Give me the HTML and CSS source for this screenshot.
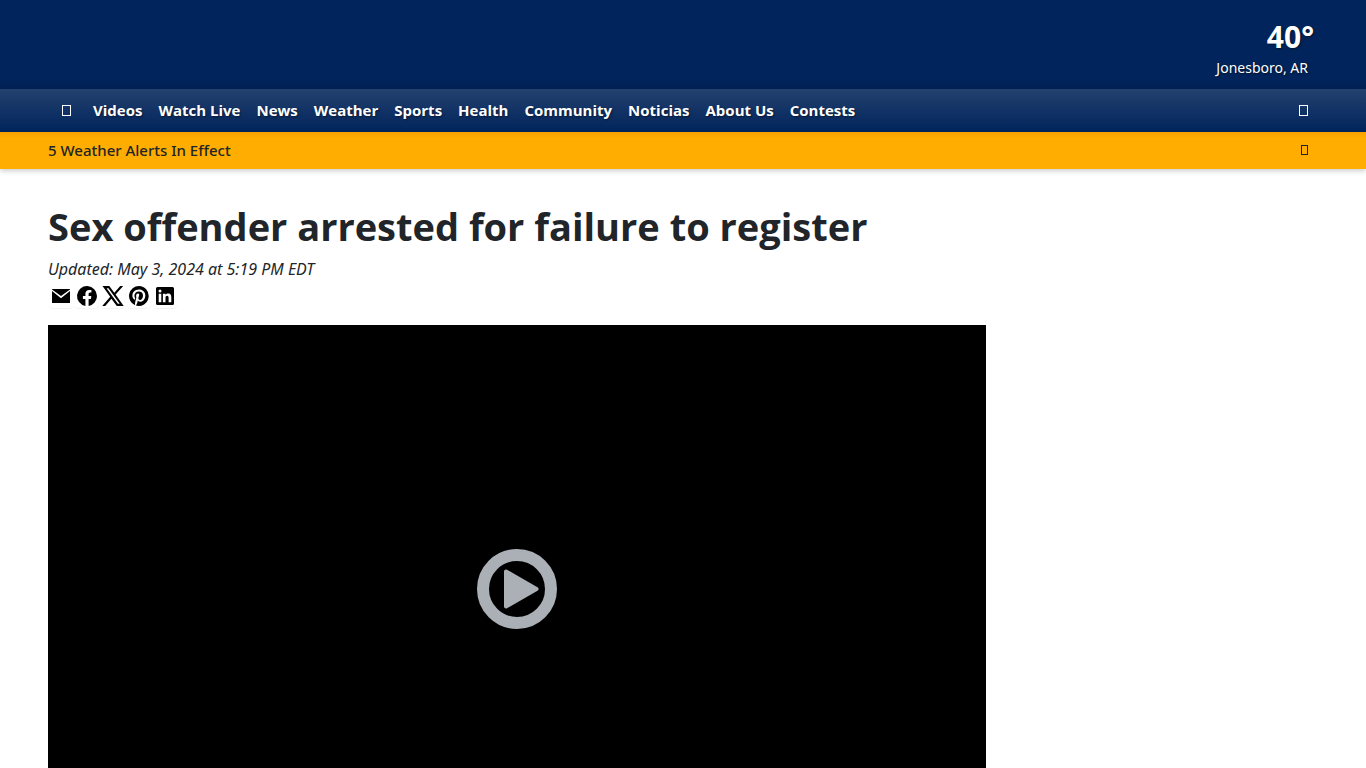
FILE: index.html
```html
<!DOCTYPE html>
<html lang="en">
<head>
<meta charset="utf-8">
<meta name="viewport" content="width=device-width, initial-scale=1">
<title>Sex offender arrested for failure to register</title>
<link rel="stylesheet" href="styles.css">
</head>
<body>
<header class="site-header">
  <div class="masthead">
    <a class="weather" href="#">
      <span class="weather-temp">40°</span>
      <span class="weather-place">Jonesboro, AR</span>
    </a>
  </div>
  <nav class="main-nav" aria-label="Main">
    <button class="icon-button" type="button" aria-label="Menu"><svg class="box-icon" viewBox="0 0 9 11"><rect x=".5" y=".5" width="8" height="10"/></svg></button>
    <ul class="nav-list">
      <li><a href="#">Videos</a></li>
      <li><a href="#">Watch Live</a></li>
      <li><a href="#">News</a></li>
      <li><a href="#">Weather</a></li>
      <li><a href="#">Sports</a></li>
      <li><a href="#">Health</a></li>
      <li><a href="#">Community</a></li>
      <li><a href="#">Noticias</a></li>
      <li><a href="#">About Us</a></li>
      <li><a href="#">Contests</a></li>
    </ul>
    <button class="icon-button" type="button" aria-label="Search"><svg class="box-icon" viewBox="0 0 9 11"><rect x=".5" y=".5" width="8" height="10"/></svg></button>
  </nav>
  <div class="alert-bar">
    <a href="#">5 Weather Alerts In Effect</a>
    <button class="icon-button" type="button" aria-label="Show alerts"><svg class="box-icon box-icon-small" viewBox="0 0 7 10"><rect x=".5" y=".5" width="6" height="9"/></svg></button>
  </div>
</header>
<main class="article">
  <h1>Sex offender arrested for failure to register</h1>
  <p class="updated">Updated: May 3, 2024 at 5:19 PM EDT</p>
  <div class="share">
    <a href="#" aria-label="Email"><svg viewBox="0 0 24 24"><path d="M3 7v12h18V7l-9 7.200zM3 5h18v.5L12 12 3 5.500z"/></svg></a>
    <a href="#" aria-label="Facebook"><svg viewBox="0 0 24 24"><path d="M22 12a10 10 0 1 0-11.600 9.900v-7H7.900V12h2.500V9.800c0-2.500 1.500-3.900 3.800-3.900 1.100 0 2.200.2 2.200.2v2.500h-1.200c-1.300 0-1.600.8-1.600 1.600V12h2.700l-.4 2.900h-2.300v7A10 10 0 0 0 22 12z"/></svg></a>
    <a href="#" aria-label="X"><svg viewBox="0 0 24 24"><path fill-rule="evenodd" d="M1.500 2h6.800l5 6.800L19.200 2h3L14.600 10.500 22.700 22h-6.900l-5.400-7.300L4.200 22h-3l8-9.200zM5.600 4.200l11.300 15.600h1.800L7.400 4.200z"/></svg></a>
    <a href="#" aria-label="Pinterest"><svg viewBox="0 0 24 24"><path d="M12 2a10 10 0 0 0-3.900 19.200c-.1-.8-.1-2 .1-2.900l1.200-5s-.3-.6-.3-1.500c0-1.400.8-2.400 1.800-2.400.9 0 1.300.6 1.300 1.400 0 .9-.6 2.100-.8 3.300-.2 1 .5 1.800 1.500 1.800 1.700 0 3.100-1.800 3.100-4.500 0-2.400-1.700-4-4.100-4-2.800 0-4.500 2.100-4.500 4.300 0 .9.300 1.800.7 2.300.1.100.1.200.1.300l-.3 1.200c0 .2-.2.200-.4.100-1.300-.6-2.100-2.400-2.100-3.900 0-3.200 2.300-6.100 6.700-6.100 3.500 0 6.200 2.500 6.200 5.800 0 3.500-2.200 6.300-5.200 6.300-1 0-2-.5-2.300-1.200l-.6 2.500c-.2.900-.9 1.900-1.300 2.600A10 10 0 1 0 12 2z"/></svg></a>
    <a href="#" aria-label="LinkedIn"><svg viewBox="0 0 24 24"><path fill-rule="evenodd" d="M4.500 3h15A1.500 1.500 0 0 1 21 4.500v15a1.500 1.500 0 0 1-1.500 1.500h-15A1.500 1.500 0 0 1 3 19.500v-15A1.500 1.500 0 0 1 4.500 3zM5.700 9.700v8.600h2.600V9.700zM7 5.500a1.500 1.500 0 1 0 0 3 1.500 1.500 0 0 0 0-3zM9.900 9.700v8.600h2.600V14c0-1.200.3-2.200 1.600-2.200s1.500 1.200 1.500 2.300v4.200h2.700v-4.700c0-2.300-.5-4.100-3.200-4.100-1.300 0-2.200.7-2.500 1.400V9.700z"/></svg></a>
  </div>
  <div class="player">
    <button class="play" type="button" aria-label="Play video"><svg viewBox="0 0 80 80"><circle cx="40" cy="40" r="34" fill="none" stroke="#abb0b7" stroke-width="12"/><path d="M29 22.500v35L59.500 40z" fill="#abb0b7" stroke="#abb0b7" stroke-width="4" stroke-linejoin="round"/></svg></button>
  </div>
</main>
</body>
</html>
```
FILE: styles.css
```css
* { box-sizing: border-box; }

body {
  margin: 0;
  color: #212529;
  background: #fff;
  font-family: "Noto Sans", "Open Sans", sans-serif;
  font-size: 15px;
  line-height: 24px;
}

a { color: inherit; text-decoration: none; }

.site-header { box-shadow: 0 2px 5px rgba(0, 0, 0, .2); }

.masthead {
  display: flex;
  justify-content: flex-end;
  padding: 19px 52px 8px 48px;
  color: #fff;
  background: linear-gradient(#00245b 90%, #001f52);
}

.weather {
  display: flex;
  flex-direction: column;
  align-items: flex-end;
  text-shadow: 1px 1px 2px rgba(0, 0, 0, .5);
}

.weather-temp {
  font-family: "Open Sans", sans-serif;
  font-size: 30px;
  font-weight: 700;
  line-height: 36px;
}

.weather-place { padding-right: 6px; font-size: 14px; line-height: 26px; }

.main-nav {
  display: flex;
  align-items: center;
  padding: 0 58px 0 62px;
  color: #fff;
  background: linear-gradient(#24416f, #00245b);
  text-shadow: 1px 1px 2px rgba(0, 0, 0, .5);
}

.nav-list {
  display: flex;
  flex: 1;
  gap: 16px;
  margin: 0;
  padding: 9px 0 10px 22px;
  list-style: none;
  font-family: "Open Sans", sans-serif;
  font-weight: 700;
}

.icon-button {
  display: flex;
  padding: 0;
  border: 0;
  color: inherit;
  background: none;
  cursor: pointer;
}

.box-icon { width: 9px; height: 11px; fill: none; stroke: currentColor; }
.box-icon-small { width: 7px; height: 10px; }

.alert-bar {
  display: flex;
  align-items: center;
  justify-content: space-between;
  padding: 6px 58px 7px 48px;
  background: linear-gradient(#f5a100, #ffad00 6px);
  font-weight: 500;
}

.article { padding: 31px 50px 0 48px; }

h1 {
  margin: 0;
  font-family: "Open Sans", sans-serif;
  font-size: 38px;
  font-weight: 700;
  line-height: 52px;
}

.updated { margin: 5px 0 3px; font-size: 16px; font-style: italic; }

.share { display: flex; gap: 2px; padding: 0 1px 1px; }
.share a { display: flex; border-radius: 4px; box-shadow: 0 1px 1px rgba(0, 0, 0, .06); }
.share svg { width: 24px; height: 24px; fill: #000; }

.player {
  display: grid;
  place-items: center;
  width: 74%;
  margin-top: 16px;
  aspect-ratio: 16 / 9;
  background: #000;
}

.play { padding: 0; border: 0; background: none; cursor: pointer; }
.play svg { display: block; width: 80px; height: 80px; }
```
